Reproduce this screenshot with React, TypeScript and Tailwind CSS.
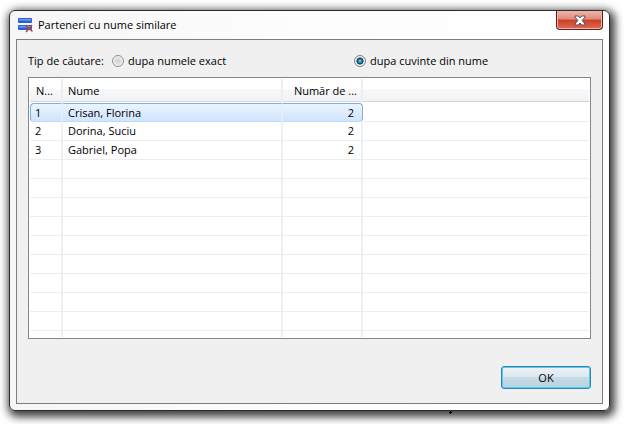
import React from 'react';

const rows = [
  { id: 1, name: 'Crisan, Florina', count: 2 },
  { id: 2, name: 'Dorina, Suciu', count: 2 },
  { id: 3, name: 'Gabriel, Popa', count: 2 },
];

const emptyRows = 9;

const radioClass =
  'appearance-none size-3 shrink-0 rounded-full border border-[#8e8f8f] bg-[radial-gradient(circle,#cfd2d4_0%,#dcdedf_40%,#f4f4f4_70%)] checked:border-[#7c8084] checked:bg-[radial-gradient(circle,#8fdcf5_0%,#2a93c4_20%,#0d2f4c_46%,#e4e8ea_54%,#f6f6f6_75%)]';

const AppIcon: React.FC = () => (
  <svg className="size-4 shrink-0" viewBox="0 0 16 16" aria-hidden="true">
    <rect x="0" y="1" width="14" height="5" rx="0.8" fill="#2c5fd0" />
    <path d="M1 2.5h12" stroke="#6f9df0" />
    <path d="M1 3.5h12" stroke="#4a80e4" />
    <rect x="0" y="8" width="14" height="5" rx="0.8" fill="#2c5fd0" />
    <path d="M1 9.5h12" stroke="#6f9df0" />
    <path d="M1 10.5h12" stroke="#4a80e4" />
    <path d="M7.5 8.5l7 6M14 8L8 15" stroke="#b0453c" strokeWidth="1.5" fill="none" />
  </svg>
);

const TitleBar: React.FC = () => (
  <header className="flex h-7 items-start justify-between">
    <div className="flex h-7 items-center gap-1 pl-0.5">
      <AppIcon />
      <h1 className="text-black">Parteneri cu nume similare</h1>
    </div>
    <button
      type="button"
      aria-label="Închide"
      className="flex h-[19px] w-[47px] items-center justify-center rounded-b border border-t-0 border-[#5e1f1a] bg-[linear-gradient(#f0b4aa_0%,#e08a7b_45%,#cb3f25_50%,#dd6c54_100%)] shadow-[inset_0_0_0_1px_#f0b5aa]"
    >
      <svg className="h-[11px] w-3" viewBox="0 0 12 11" aria-hidden="true">
        <path d="M1 1h3.2L6 3l1.8-2H11v1L8.2 5.5 11 9v1H7.8L6 8l-1.8 2H1V9l2.8-3.5L1 2z" fill="#fff" stroke="#50525f" />
      </svg>
    </button>
  </header>
);

const SearchType: React.FC = () => (
  <div role="radiogroup" aria-labelledby="search-type" className="grid grid-cols-[84px_242px_1fr] items-center">
    <span id="search-type" className="whitespace-nowrap">Tip de căutare:</span>
    <label className="flex items-center gap-1">
      <input type="radio" name="search" className={radioClass} />
      dupa numele exact
    </label>
    <label className="flex items-center gap-1">
      <input type="radio" name="search" defaultChecked className={radioClass} />
      dupa cuvinte din nume
    </label>
  </div>
);

const PartnersTable: React.FC = () => (
  <div className="mt-2 border border-[#828790] bg-white p-px">
    <table className="w-full table-fixed border-separate border-spacing-0">
      <colgroup>
        <col className="w-[33px]" />
        <col className="w-[220px]" />
        <col className="w-20" />
        <col />
      </colgroup>
      <thead>
        <tr className="h-6 bg-[linear-gradient(#fff_40%,#f7f8fa_42%,#f1f2f4_92%,#d5d5d5_92%,#d5d5d5_96%,#fff_96%)] text-left [&>th]:border-r-2 [&>th]:border-[#eceef1] [&>th]:p-0 [&>th]:font-normal [&>th:last-child]:border-r-0">
          <th className="pl-1.5!">N...</th>
          <th className="pl-[5px]!">Nume</th>
          <th className="whitespace-nowrap pr-1! text-right">Număr de ...</th>
          <th />
        </tr>
      </thead>
      <tbody className="[&_td]:h-[19px] [&_td]:border-b [&_td]:border-b-[#ededed] [&_td]:p-0">
        {rows.map((row, index) => (
          <tr
            key={row.id}
            className={
              index === 0
                ? '[&>td:not(:last-child)]:border-t [&>td:not(:last-child)]:border-t-[#84acdd] [&>td:not(:last-child)]:border-b-[#c3daf5] [&>td:not(:last-child)]:bg-linear-to-b [&>td:not(:last-child)]:from-[#ebf4fe] [&>td:not(:last-child)]:to-[#cfe4fe]'
                : ''
            }
          >
            <td className={index === 0 ? 'rounded-l-sm border-l border-r-2 border-l-[#84acdd] border-r-[#e4edf8] pl-1!' : 'border-r-2 border-r-[#edf0f5] pl-[5px]!'}>
              {row.id}
            </td>
            <td className={index === 0 ? 'border-r-2 border-r-[#e4edf8] pl-[5px]!' : 'border-r-2 border-r-[#edf0f5] pl-[5px]!'}>
              {row.name}
            </td>
            <td className={index === 0 ? 'rounded-r-sm border-r border-r-[#84acdd] pr-2! text-right' : 'border-r-2 border-r-[#edf0f5] pr-[7px]! text-right'}>
              {row.count}
            </td>
            <td />
          </tr>
        ))}
        {Array.from({ length: emptyRows }, (_, index) => (
          <tr key={index} className="[&>td:not(:last-child)]:border-r-2 [&>td:not(:last-child)]:border-r-[#edf0f5]">
            <td />
            <td />
            <td />
            <td />
          </tr>
        ))}
        <tr className="[&>td]:h-1.5! [&>td]:border-b-0! [&>td:not(:last-child)]:border-r-2 [&>td:not(:last-child)]:border-r-[#edf0f5]">
          <td />
          <td />
          <td />
          <td />
        </tr>
      </tbody>
    </table>
  </div>
);

const App: React.FC = () => {
  return (
    <main className="min-h-screen bg-white pt-2.5 pr-3.5 pb-3 pl-[9px] font-['Open_Sans',sans-serif] text-[11px] leading-4 text-black overflow-hidden">
      <div className="relative rounded-md border border-[#2b2b2b] bg-linear-to-r from-[#f6f6f6] via-[#fdfdfd] to-white px-1.5 pb-1.5 shadow-[2px_3px_9px_3px_rgba(0,0,0,0.75)]">
        <TitleBar />
        <div className="border border-[#7b7d80] bg-[#f0f0f0] px-[11px] pt-[13px] pb-3.5">
          <SearchType />
          <PartnersTable />
          <div className="mt-[27px] flex justify-end">
            <button
              type="button"
              className="h-[23px] w-[90px] rounded-[3px] border border-[#3c7fb1] bg-[linear-gradient(#ecf3f7_0%,#dce8ef_48%,#c6dae5_50%,#b9d3e0_100%)] shadow-[inset_0_0_0_1px_#48d0f5]"
            >
              OK
            </button>
          </div>
        </div>
        <svg className="absolute right-[157px] -bottom-1 size-[3px]" viewBox="0 0 3 3" aria-hidden="true">
          <path d="M1 0h1v1h1v1H2v1H1V2H0V1h1z" fill="#000" />
        </svg>
      </div>
    </main>
  );
};

export default App;
